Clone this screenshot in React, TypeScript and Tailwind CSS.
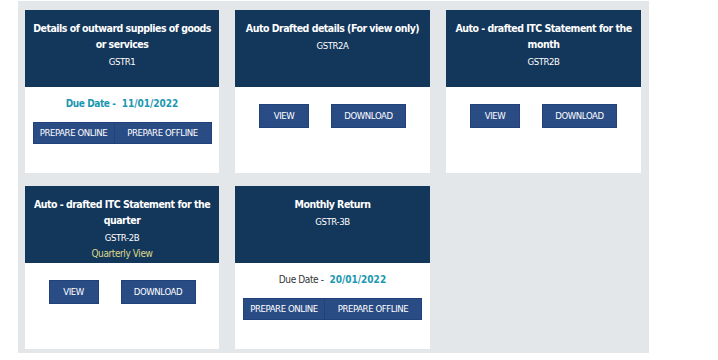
import React from 'react'

type Card = {
  title: string[]
  code: string
  extra?: string
  kind: 'prepare' | 'view'
  due?: { label: string; date: string; labelTeal: boolean }
}

const rows: Card[][] = [
  [
    {
      title: ['Details of outward supplies of goods', 'or services'],
      code: 'GSTR1',
      kind: 'prepare',
      due: { label: 'Due Date -', date: '11/01/2022', labelTeal: true },
    },
    { title: ['Auto Drafted details (For view only)'], code: 'GSTR2A', kind: 'view' },
    { title: ['Auto - drafted ITC Statement for the', 'month'], code: 'GSTR2B', kind: 'view' },
  ],
  [
    {
      title: ['Auto - drafted ITC Statement for the', 'quarter'],
      code: 'GSTR-2B',
      extra: 'Quarterly View',
      kind: 'view',
    },
    {
      title: ['Monthly Return'],
      code: 'GSTR-3B',
      kind: 'prepare',
      due: { label: 'Due Date -', date: '20/01/2022', labelTeal: false },
    },
  ],
]

const font = { fontFamily: '"DejaVu Sans Condensed", "Liberation Sans", sans-serif' }

function ReturnCard({ card }: { card: Card }) {
  return (
    <div className="h-[163px] bg-white flex flex-col">
      {/* Header */}
      <div className="h-[77px] bg-[#13365b] flex flex-col items-center pt-[10px] text-white">
        {card.title.map((t) => (
          <div key={t} className="text-[10.5px] leading-[16px] font-bold tracking-[-0.5px] whitespace-nowrap">{t}</div>
        ))}
        <div className="text-[9.5px] leading-[14px] mt-[3px] tracking-[-0.4px]">{card.code}</div>
        {card.extra && (
          <div className="text-[10px] leading-[14px] mt-[2px] tracking-[-0.4px] text-[#dcd88a]">{card.extra}</div>
        )}
      </div>

      {/* Body */}
      {card.kind === 'prepare' ? (
        <div className="flex flex-col items-center pt-[10px]">
          {card.due && (
            <div className="text-[10px] leading-[14px] font-bold">
              <span className={card.due.labelTeal ? 'text-[#1b97b0] tracking-[-0.4px]' : 'text-[#333] font-normal tracking-[-0.4px]'}>{card.due.label}</span>
              <span className="text-[#1b97b0] ml-[6px]">{card.due.date}</span>
            </div>
          )}
          <div className="mt-[11px] flex h-[22px] bg-[#2a4c85] border border-[#22417a] text-white text-[9.5px] tracking-[-0.4px]">
            <button className="w-[81px] border-r border-[#22417a]">PREPARE ONLINE</button>
            <button className="w-[96px]">PREPARE OFFLINE</button>
          </div>
        </div>
      ) : (
        <div className="flex justify-center gap-[22px] pt-[17px] text-[9.5px] tracking-[-0.4px] text-white">
          <button className="w-[50px] h-[24px] bg-[#2a4c85] border border-[#22417a]">VIEW</button>
          <button className="w-[75px] h-[24px] bg-[#2a4c85] border border-[#22417a]">DOWNLOAD</button>
        </div>
      )}
    </div>
  )
}

export default function App() {
  return (
    <div className="w-[718px] h-[360px] bg-white pt-[1px]" style={font}>
      <div className="ml-[18px] w-[631px] h-[352px] bg-[#e3e7ea] pt-[9px] pl-[7px]">
        <div className="grid grid-cols-[194px_195px_195px] gap-x-4 gap-y-[13px]">
          {rows.flat().map((c) => (
            <ReturnCard key={c.code} card={c} />
          ))}
        </div>
      </div>
    </div>
  )
}
